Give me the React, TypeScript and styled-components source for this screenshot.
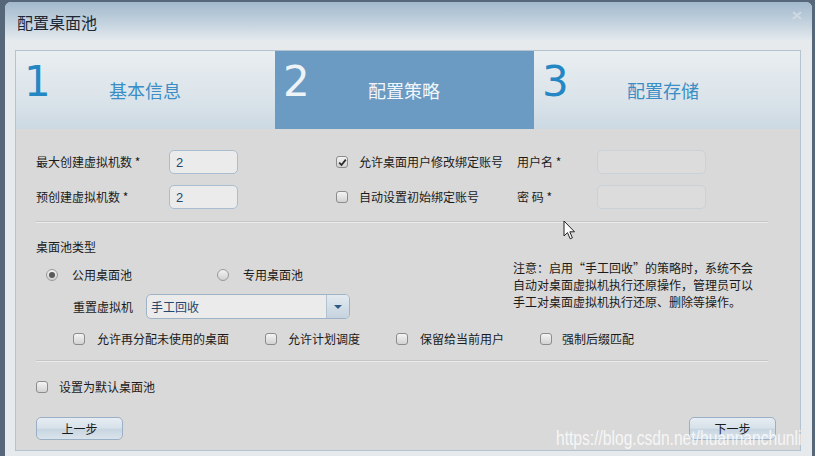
import React from "react";
import styled, { createGlobalStyle } from "styled-components";

const Global = createGlobalStyle`
  html, body { margin: 0; padding: 0; }
  body {
    background: #56677a;
    font-family: "Noto Sans CJK SC", "Noto Sans", sans-serif;
    overflow: hidden;
    width: 815px;
    height: 456px;
  }
  #root { position: relative; width: 815px; height: 456px; }
`;

const Dialog = styled.div`
  position: relative;
  margin: 2px 3px 0 5px;
  width: 807px;
  height: 454px;
  border-radius: 6px 6px 0 0;
  background: #e7eaec;
  display: flex;
  flex-direction: column;
  overflow: hidden;
`;

const TitleBar = styled.div`
  height: 38px;
  flex: none;
  display: flex;
  align-items: center;
  justify-content: space-between;
  padding: 0 10px 0 12px;
  background: linear-gradient(#a2b9cd, #c3d2de 55%, #e3e9ed);
  color: #1c2836;
  font-size: 16px;
`;

const TitleText = styled.span`
  margin-top: 1px;
`;

const Close = styled.span`
  align-self: flex-start;
  margin-top: 9px;
  display: flex;
`;

const Body = styled.div`
  flex: 1;
  padding: 10px 11px 0 10px;
`;

const Panel = styled.div`
  height: 399px;
  border: 1px solid #b3c3cf;
  background: #d9d9d9;
  display: flex;
  flex-direction: column;
`;

const Steps = styled.div`
  height: 78px;
  display: flex;
  background: linear-gradient(#e9eef1, #dbe4ea 60%, #ccd9e3);
`;

const Step = styled.div<{ $active?: boolean; $w?: number }>`
  box-sizing: border-box;
  ${(p) => (p.$w ? `width: ${p.$w}px;` : "flex: 1;")}
  display: grid;
  grid-template-columns: 85px 1fr;
  align-items: start;
  padding: 10px 0 0 8px;
  background: ${(p) => (p.$active ? "#6b9bc3" : "transparent")};
`;

const Digit = styled.span<{ $active?: boolean }>`
  font-family: "DejaVu Sans", sans-serif;
  font-size: 42px;
  line-height: 42px;
  color: ${(p) => (p.$active ? "#eef3f8" : "#2487c3")};
`;

const StepLabel = styled.span<{ $active?: boolean }>`
  margin-top: 17px;
  font-size: 18px;
  line-height: 24px;
  color: ${(p) => (p.$active ? "#f2f6fa" : "#3a8ec5")};
`;

const Content = styled.div`
  padding: 0 24px 0 20px;
  font-size: 12px;
  color: #1b1b1b;
`;

const TopGrid = styled.div`
  margin-top: 21px;
  display: grid;
  grid-template-columns: 133px 69px 98px 181px 80px 109px;
  grid-auto-rows: 24px;
  row-gap: 11px;
  align-items: center;
`;

const Label = styled.span`
  line-height: 16px;
  white-space: nowrap;
`;

const TextInput = styled.div<{ $empty?: boolean }>`
  height: 24px;
  box-sizing: border-box;
  border-radius: 5px;
  border: 1px solid ${(p) => (p.$empty ? "#c9d1d9" : "#a9bdd1")};
  background: ${(p) => (p.$empty ? "#dcdcdc" : "#ebebeb")};
  padding-left: 6px;
  display: flex;
  align-items: center;
  font-family: "Liberation Sans", sans-serif;
  font-size: 13px;
  color: #24466e;
`;

const CheckItem = styled.label<{ $gap?: number }>`
  display: flex;
  align-items: center;
  gap: ${(p) => p.$gap ?? 11}px;
  line-height: 16px;
  white-space: nowrap;
`;

const Box = styled.span`
  width: 12px;
  height: 12px;
  box-sizing: border-box;
  flex: none;
  border: 1px solid #8c8c8c;
  border-radius: 3px;
  background: linear-gradient(#f4f4f4, #d2d2d2);
  display: flex;
  align-items: center;
  justify-content: center;
`;

const RadioCircle = styled.span`
  width: 12px;
  height: 12px;
  box-sizing: border-box;
  flex: none;
  border: 1px solid #9a9a9a;
  border-radius: 50%;
  background: linear-gradient(#f2f2f2, #d0d0d0);
  display: flex;
  align-items: center;
  justify-content: center;
`;

const Dot = styled.span`
  width: 6px;
  height: 6px;
  border-radius: 50%;
  background: #5a5a5a;
`;

const Separator = styled.div<{ $top?: number }>`
  margin-top: ${(p) => p.$top ?? 0}px;
  margin-right: 8px;
  height: 0;
  border-top: 1px solid #c6c6c6;
  border-bottom: 1px solid #ebebeb;
`;

const SectionTitle = styled.div`
  margin-top: 16px;
  line-height: 16px;
`;

const MidRow = styled.div`
  margin-top: 4px;
  display: flex;
`;

const LeftCol = styled.div`
  width: 477px;
  padding-top: 8px;
`;

const RadioRow = styled.div`
  display: flex;
  padding-left: 10px;
  height: 16px;
`;

const RadioItem = styled.label<{ $w?: number }>`
  display: flex;
  align-items: center;
  gap: 14px;
  line-height: 16px;
  ${(p) => (p.$w ? `width: ${p.$w}px;` : "")}
`;

const SelectRow = styled.div`
  margin-top: 11px;
  padding-left: 37px;
  display: flex;
  align-items: center;
`;

const SelectLabel = styled.span`
  width: 73px;
  line-height: 16px;
`;

const Select = styled.div`
  width: 204px;
  height: 25px;
  box-sizing: border-box;
  border: 1px solid #9fb3c7;
  border-radius: 5px;
  background: #ebebeb;
  display: flex;
  overflow: hidden;
`;

const SelectValue = styled.span`
  flex: 1;
  padding-left: 4px;
  display: flex;
  align-items: center;
  color: #24466e;
`;

const SelectArrow = styled.span`
  width: 22px;
  border-left: 1px solid #b2c2d1;
  background: linear-gradient(#e3eaf0, #d3dee7 50%, #c6d3de);
  display: flex;
  align-items: center;
  justify-content: center;
  &::after {
    content: "";
    border-left: 4px solid transparent;
    border-right: 4px solid transparent;
    border-top: 4px solid #2e5a86;
  }
`;

const Note = styled.div`
  line-height: 17px;
  white-space: nowrap;
`;

const CheckRow = styled.div`
  margin-top: 12px;
  padding-left: 37px;
  display: flex;
  gap: 36px;
  height: 16px;
`;

const DefaultRow = styled.div`
  margin-top: 17px;
  display: flex;
`;

const ButtonRow = styled.div`
  margin-top: 22px;
  display: flex;
  justify-content: space-between;
`;

const Button = styled.button`
  width: 87px;
  height: 23px;
  box-sizing: border-box;
  border: 1px solid #9bb0c5;
  border-radius: 5px;
  background: linear-gradient(#e6edf3, #d8e2ea 45%, #c8d6e2 55%, #d9e3eb);
  font-family: "Noto Sans CJK SC", sans-serif;
  font-size: 12px;
  color: #1b1b1b;
  padding: 0;
  cursor: default;
`;

const Watermark = styled.div`
  position: absolute;
  left: 556px;
  top: 425px;
  font-family: "Liberation Sans", sans-serif;
  font-size: 20px;
  line-height: 22px;
  white-space: nowrap;
  color: rgba(255, 255, 255, 0.78);
  transform: scaleX(0.78);
  transform-origin: left top;
  pointer-events: none;
`;

const Cursor = styled.svg`
  position: absolute;
  left: 563px;
  top: 218px;
`;

const Check = () => (
  <svg width="9" height="9" viewBox="0 0 9 9">
    <path d="M1.2 4.6 L3.5 7 L7.8 1.6" fill="none" stroke="#2b2b2b" strokeWidth="1.8" />
  </svg>
);

const CheckBox = ({ checked, children, gap }: { checked?: boolean; children: React.ReactNode; gap?: number }) => (
  <CheckItem $gap={gap}>
    <Box>{checked && <Check />}</Box>
    <span>{children}</span>
  </CheckItem>
);

const Radio = ({ checked, children, w }: { checked?: boolean; children: React.ReactNode; w?: number }) => (
  <RadioItem $w={w}>
    <RadioCircle>{checked && <Dot />}</RadioCircle>
    <span>{children}</span>
  </RadioItem>
);

export default function App() {
  return (
    <>
      <Global />
      <Dialog>
        <TitleBar>
          <TitleText>配置桌面池</TitleText>
          <Close>
            <svg width="10" height="9" viewBox="0 0 10 9">
              <path d="M1 1 L9 8 M9 1 L1 8" stroke="#cfd9e2" strokeWidth="2.2" />
            </svg>
          </Close>
        </TitleBar>
        <Body>
          <Panel>
            <Steps>
              <Step $w={259}>
                <Digit>1</Digit>
                <StepLabel>基本信息</StepLabel>
              </Step>
              <Step $w={259} $active>
                <Digit $active>2</Digit>
                <StepLabel $active>配置策略</StepLabel>
              </Step>
              <Step>
                <Digit>3</Digit>
                <StepLabel>配置存储</StepLabel>
              </Step>
            </Steps>
            <Content>
              <TopGrid>
                <Label>最大创建虚拟机数 *</Label>
                <TextInput>2</TextInput>
                <span />
                <CheckBox checked>允许桌面用户修改绑定账号</CheckBox>
                <Label>用户名 *</Label>
                <TextInput $empty />
                <Label>预创建虚拟机数 *</Label>
                <TextInput>2</TextInput>
                <span />
                <CheckBox>自动设置初始绑定账号</CheckBox>
                <Label>密 码 *</Label>
                <TextInput $empty />
              </TopGrid>
              <Separator $top={12} />
              <SectionTitle>桌面池类型</SectionTitle>
              <MidRow>
                <LeftCol>
                  <RadioRow>
                    <Radio checked w={171}>公用桌面池</Radio>
                    <Radio>专用桌面池</Radio>
                  </RadioRow>
                  <SelectRow>
                    <SelectLabel>重置虚拟机</SelectLabel>
                    <Select>
                      <SelectValue>手工回收</SelectValue>
                      <SelectArrow />
                    </Select>
                  </SelectRow>
                </LeftCol>
                <Note>
                  注意：启用“手工回收”的策略时，系统不会
                  <br />
                  自动对桌面虚拟机执行还原操作，管理员可以
                  <br />
                  手工对桌面虚拟机执行还原、删除等操作。
                </Note>
              </MidRow>
              <CheckRow>
                <CheckBox gap={12}>允许再分配未使用的桌面</CheckBox>
                <CheckBox gap={11}>允许计划调度</CheckBox>
                <CheckBox gap={12}>保留给当前用户</CheckBox>
                <CheckBox gap={10}>强制后缀匹配</CheckBox>
              </CheckRow>
              <Separator $top={13} />
              <DefaultRow>
                <CheckBox>设置为默认桌面池</CheckBox>
              </DefaultRow>
              <ButtonRow>
                <Button>上一步</Button>
                <Button>下一步</Button>
              </ButtonRow>
            </Content>
          </Panel>
        </Body>
      </Dialog>
      <Cursor width="13" height="21" viewBox="0 0 13 21">
        <path d="M1 1 L1 16 L4.5 12.6 L7.2 18.8 L9.4 17.8 L6.8 11.8 L11.5 11.8 Z" fill="#ffffff" stroke="#222" strokeWidth="1" strokeLinejoin="round" />
      </Cursor>
      <Watermark>https://blog.csdn.net/huannanchunli</Watermark>
    </>
  );
}
